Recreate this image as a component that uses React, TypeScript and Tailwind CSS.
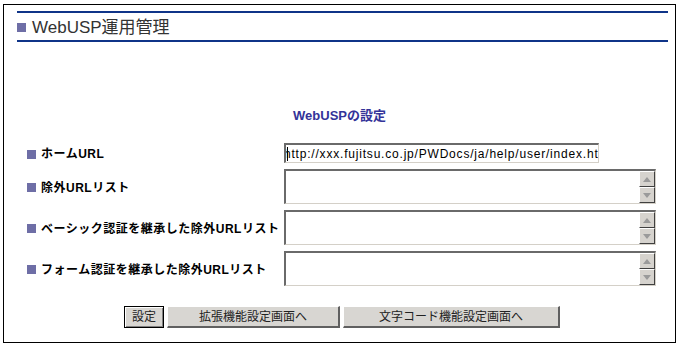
import React from 'react'

const JP = { fontFamily: '"Liberation Sans", "Noto Sans CJK JP", sans-serif' }

function Bullet() {
  return <span className="inline-block w-[9px] h-[9px] bg-[#6e6ea6] shrink-0" />
}

function ScrollButton({ up }: { up?: boolean }) {
  return (
    <div className="w-[16px] h-[16px] bg-[#d6d3ce] border-t border-l border-t-white border-l-white border-b border-r border-b-[#404040] border-r-[#404040] flex items-center justify-center">
      <svg width="8" height="5" viewBox="0 0 8 5">
        {up ? <polygon points="4,0 8,5 0,5" fill="#9a9a9a" /> : <polygon points="0,0 8,0 4,5" fill="#9a9a9a" />}
      </svg>
    </div>
  )
}

function ListBox() {
  return (
    <div className="w-[372px] h-[35px] flex border-t-2 border-l-2 border-t-[#6a6a6a] border-l-[#6a6a6a] border-b border-r border-b-[#d4d0c8] border-r-[#d4d0c8] bg-white">
      <div className="flex-1" />
      <div className="flex flex-col">
        <ScrollButton up />
        <ScrollButton />
      </div>
    </div>
  )
}

function Row({ label, children }: { label: string; children: React.ReactNode }) {
  return (
    <div className="flex items-center">
      <div className="w-[257px] flex items-center gap-[5px] pt-[2px]">
        <Bullet />
        <span className="text-[12px] font-bold text-black leading-none tracking-[0.5px] whitespace-nowrap" style={JP}>
          {label}
        </span>
      </div>
      {children}
    </div>
  )
}

function Btn({ label, w, primary }: { label: string; w: string; primary?: boolean }) {
  return (
    <button
      className={`${w} h-[22px] bg-[#d8d6d2] text-[12px] text-[#222] leading-none flex items-center justify-center ${
        primary
          ? 'border border-black shadow-[inset_1px_1px_0_#fff,inset_-1px_-1px_0_#808080]'
          : 'border-t border-l border-t-white border-l-white border-b-2 border-r-2 border-b-[#606060] border-r-[#606060]'
      }`}
      style={JP}
    >
      {label}
    </button>
  )
}

export default function App() {
  return (
    <div className="w-[681px] h-[348px] bg-white pl-[3px] pt-[4px]">
      <div className="w-[673px] h-[339px] border border-black flex flex-col">
        <div className="ml-[13px] mr-[7px] mt-[6px] h-[31px] border-t-2 border-b-2 border-[#0f3488] flex items-center gap-[6px] pt-[1px]">
          <Bullet />
          <span className="text-[17px] text-[#333] leading-none" style={JP}>
            WebUSP運用管理
          </span>
        </div>

        <div className="mt-[66px] text-center text-[13px] font-bold text-[#333399] leading-[16px]" style={JP}>
          WebUSPの設定
        </div>

        <div className="ml-[23px] mt-[19px] flex flex-col gap-[6px]">
          <Row label="ホームURL">
            <div className="relative w-[315px] h-[20px] overflow-hidden border-t-2 border-l-2 border-t-[#6a6a6a] border-l-[#6a6a6a] border-b border-r border-b-[#d4d0c8] border-r-[#d4d0c8] bg-white flex items-center">
              <span className="absolute left-[1px] top-[2px] w-px h-[14px] bg-black" />
              <span
                className="ml-[-2px] whitespace-nowrap text-[12px] text-black tracking-[0.8px] leading-none"
                style={{ fontFamily: '"Liberation Sans", sans-serif' }}
              >
                http://xxx.fujitsu.co.jp/PWDocs/ja/help/user/index.htm
              </span>
            </div>
          </Row>
          <Row label="除外URLリスト">
            <ListBox />
          </Row>
          <Row label="ベーシック認証を継承した除外URLリスト">
            <ListBox />
          </Row>
          <Row label="フォーム認証を継承した除外URLリスト">
            <ListBox />
          </Row>
        </div>

        <div className="ml-[120px] mt-[20px] flex gap-[3px]">
          <Btn label="設定" w="w-[40px]" primary />
          <Btn label="拡張機能設定画面へ" w="w-[173px]" />
          <Btn label="文字コード機能設定画面へ" w="w-[217px]" />
        </div>
      </div>
    </div>
  )
}
